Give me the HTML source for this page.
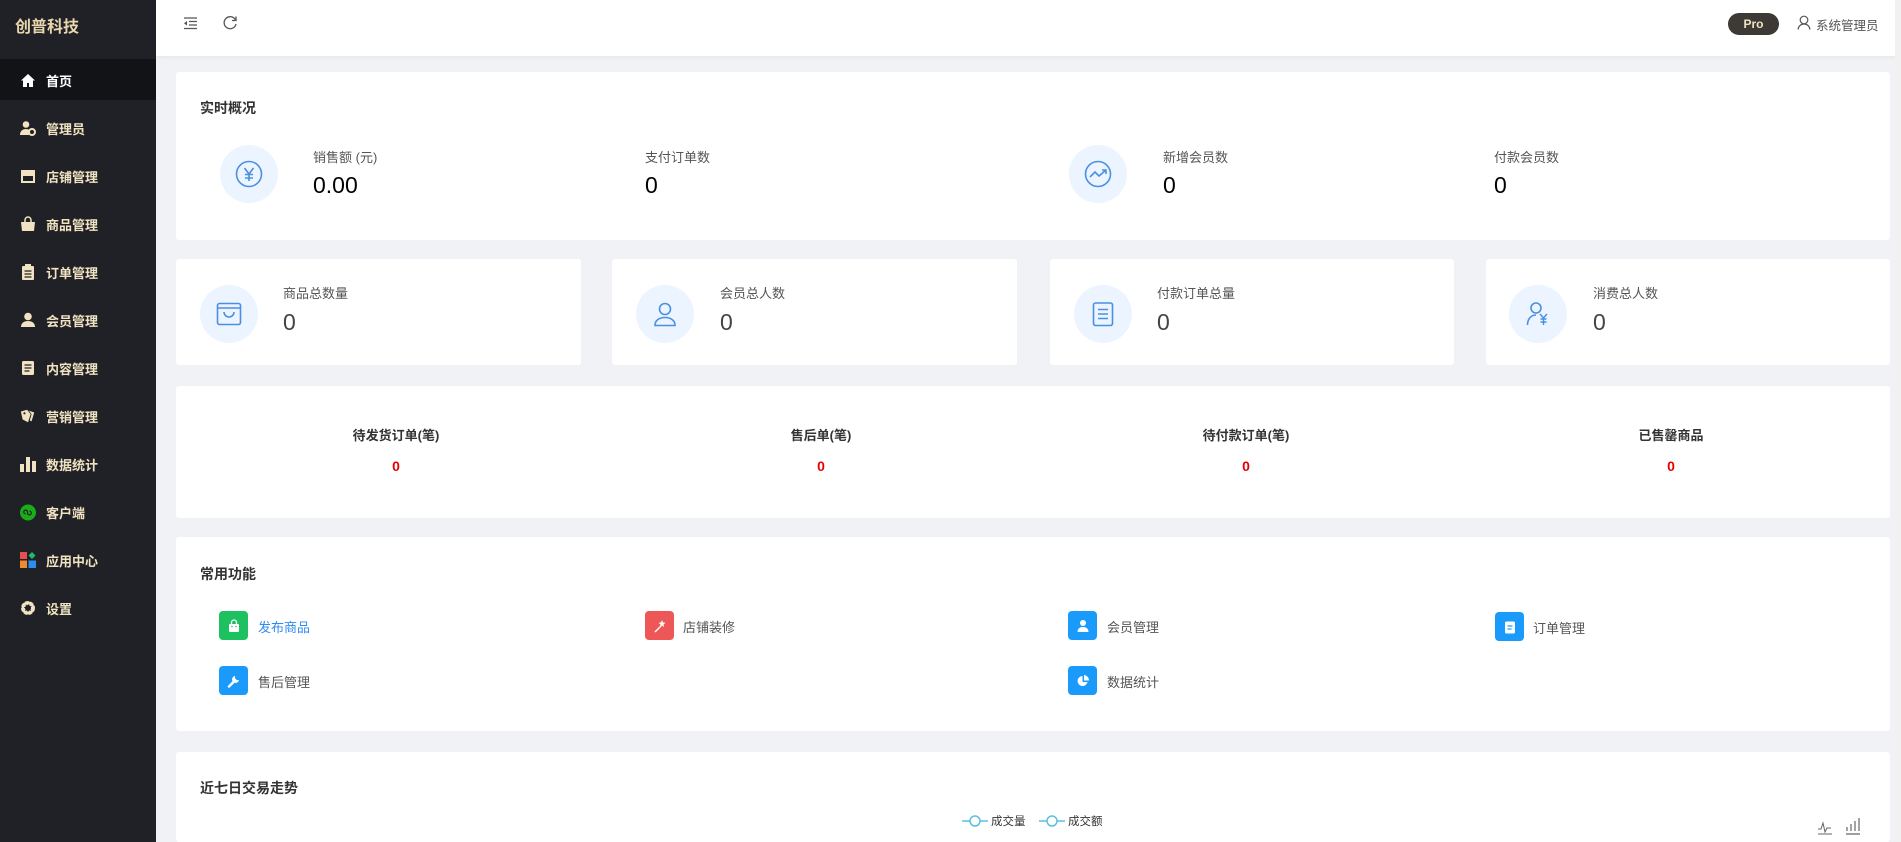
<!DOCTYPE html>
<html style="width:1901px;height:842px;overflow:hidden;background:#f0f2f5"><head><meta charset="utf-8"><style>
*{margin:0;padding:0;box-sizing:border-box}
body{width:1901px;height:842px;overflow:hidden;background:#f0f2f5;font-family:"Liberation Sans","Noto Sans CJK SC",sans-serif;position:relative;color:#333}
.a{position:absolute}
.side{left:0;top:0;width:156px;height:842px;background:#202126}
.logo{left:15px;top:13px;font-size:16px;font-weight:bold;color:#e8d6ad}
.act{left:0;top:59px;width:156px;height:41px;background:#121317}
.mi{left:20px;height:20px;display:flex;align-items:center;font-size:13px;font-weight:bold;color:#f1e3c2}
.mi .ic{width:16px;height:16px;margin-right:10px;display:flex;align-items:center;justify-content:center}
.hdr{left:156px;top:0;width:1745px;height:56px;background:#fff;box-shadow:0 1px 4px rgba(0,0,0,.06)}
.card{background:#fff;border-radius:3px}
.t{font-size:14px;font-weight:bold;color:#333}
.circ{width:58px;height:58px;border-radius:50%;background:#ecf4ff;display:flex;align-items:center;justify-content:center}
.lb{font-size:13px;color:#555}
.v1{font-size:23px;color:#000}
.v2{font-size:23px;color:#444}
.cl{font-size:13px;font-weight:bold;color:#333;text-align:center;width:200px}
.cv{font-size:14px;font-weight:bold;color:#e60000;text-align:center;width:200px}
.fi{width:29px;height:29px;border-radius:4px;display:flex;align-items:center;justify-content:center}
.ft{font-size:13px;color:#555}
</style></head><body>
<div class="a side"></div>
<div class="a logo">创普科技</div>
<div class="a act"></div>
<div class="a mi" style="top:70px;color:#fff"><span class="ic"><svg width="16" height="15" viewBox="0 0 16 15"><path d="M8 1L1 7.5h2V14h4v-4h2v4h4V7.5h2z" fill="#fff"/></svg></span>首页</div>
<div class="a mi" style="top:118px"><span class="ic"><svg width="16" height="16" viewBox="0 0 16 16"><circle cx="6" cy="4.5" r="3.3" fill="#f1e3c2"/><path d="M0 15c0-4 2.5-6 6-6 1.5 0 2.5.4 3 .8V15z" fill="#f1e3c2"/><circle cx="12" cy="12" r="3" fill="none" stroke="#f1e3c2" stroke-width="2"/></svg></span>管理员</div>
<div class="a mi" style="top:166px"><span class="ic"><svg width="16" height="14" viewBox="0 0 16 14"><path d="M1 1h14v4H1z" fill="#f1e3c2"/><path d="M2 6h12v7H2z" fill="none" stroke="#f1e3c2" stroke-width="2"/></svg></span>店铺管理</div>
<div class="a mi" style="top:214px"><span class="ic"><svg width="16" height="16" viewBox="0 0 16 16"><path d="M5 6V4a3 3 0 016 0v2" fill="none" stroke="#f1e3c2" stroke-width="1.5"/><path d="M1 6h14l-1 9H2z" fill="#f1e3c2"/></svg></span>商品管理</div>
<div class="a mi" style="top:262px"><span class="ic"><svg width="14" height="16" viewBox="0 0 14 16"><rect x="1" y="2" width="12" height="14" rx="1" fill="#f1e3c2"/><rect x="4" y="0" width="6" height="3" fill="#f1e3c2"/><path d="M3.5 7h7M3.5 10h7M3.5 13h7" stroke="#202126" stroke-width="1.3"/></svg></span>订单管理</div>
<div class="a mi" style="top:310px"><span class="ic"><svg width="16" height="16" viewBox="0 0 16 16"><circle cx="8" cy="4.5" r="3.8" fill="#f1e3c2"/><path d="M1 15c0-4 3-6 7-6s7 2 7 6z" fill="#f1e3c2"/></svg></span>会员管理</div>
<div class="a mi" style="top:358px"><span class="ic"><svg width="14" height="16" viewBox="0 0 14 16"><rect x="1" y="1" width="12" height="14" rx="1.5" fill="#f1e3c2"/><path d="M3.5 5h7M3.5 8h7M3.5 11h5" stroke="#202126" stroke-width="1.3"/></svg></span>内容管理</div>
<div class="a mi" style="top:406px"><span class="ic"><svg width="18" height="16" viewBox="0 0 18 16"><path d="M1 3l7-2 4 5-3 9-6-3z" fill="#f1e3c2"/><path d="M10 2l6 2-3 10-2-1 2-7z" fill="#f1e3c2"/><circle cx="5" cy="5" r="1.2" fill="#202126"/></svg></span>营销管理</div>
<div class="a mi" style="top:454px"><span class="ic"><svg width="16" height="16" viewBox="0 0 16 16"><rect x="0" y="8" width="4" height="8" fill="#f1e3c2"/><rect x="6" y="1" width="4" height="15" fill="#f1e3c2"/><rect x="12" y="5" width="4" height="11" fill="#f1e3c2"/></svg></span>数据统计</div>
<div class="a mi" style="top:502px"><span class="ic"><svg width="17" height="17" viewBox="0 0 17 17"><circle cx="8.5" cy="8.5" r="8.5" fill="#1aad19"/><path d="M6 10a2 2 0 112-2v1a2 2 0 102-2" fill="none" stroke="#202126" stroke-width="1.3"/></svg></span>客户端</div>
<div class="a mi" style="top:550px"><span class="ic"><svg width="16" height="16" viewBox="0 0 16 16"><rect x="0" y="0" width="7" height="7" fill="#e94e4e"/><rect x="0" y="8.5" width="7" height="7.5" fill="#f08a2e"/><rect x="8.5" y="8.5" width="7.5" height="7.5" fill="#2d8cf0"/><path d="M12 0l3.5 3.5L12 7 8.5 3.5z" fill="#19be6b"/></svg></span>应用中心</div>
<div class="a mi" style="top:598px"><span class="ic"><svg width="16" height="16" viewBox="0 0 16 16"><circle cx="8" cy="8" r="5" fill="none" stroke="#f1e3c2" stroke-width="4" stroke-dasharray="3 1.2"/><circle cx="8" cy="8" r="5.2" fill="none" stroke="#f1e3c2" stroke-width="2.5"/></svg></span>设置</div>

<div class="a hdr"></div>
<svg class="a" style="left:183px;top:17px" width="15" height="13" viewBox="0 0 15 13"><path d="M1 1h13M6 4.5h8M6 8h8M1 11.5h13" stroke="#555" stroke-width="1.2"/><path d="M4 4l-3 2.3 3 2.3z" fill="#555"/></svg>
<svg class="a" style="left:222px;top:15px" width="16" height="16" viewBox="0 0 16 16"><path d="M13.5 5A6 6 0 1014 9" fill="none" stroke="#555" stroke-width="1.3"/><path d="M14 1.5v4h-4" fill="none" stroke="#555" stroke-width="1.3"/></svg>
<div class="a" style="left:1728px;top:13px;width:51px;height:22px;border-radius:11px;background:#3d3a36;color:#f1e3c2;font-size:12px;font-weight:bold;text-align:center;line-height:22px">Pro</div>
<svg class="a" style="left:1797px;top:15px" width="14" height="15" viewBox="0 0 14 15"><circle cx="7" cy="5" r="3.8" fill="none" stroke="#555" stroke-width="1.2"/><path d="M1 14.5c.5-3.5 3-5.5 6-5.5s5.5 2 6 5.5" fill="none" stroke="#555" stroke-width="1.2"/></svg>
<div class="a" style="left:1816px;top:15px;font-size:12.5px;color:#555">系统管理员</div>

<div class="a card" style="left:176px;top:72px;width:1714px;height:168px"></div>
<div class="a t" style="left:200px;top:98px">实时概况</div>
<div class="a circ" style="left:220px;top:145px"><svg width="28" height="28" viewBox="0 0 28 28"><circle cx="14" cy="14" r="12.5" fill="none" stroke="#4a90e2" stroke-width="1.6"/><path d="M9.5 8l4.5 6 4.5-6M14 14v7M10 14.5h8M10 18h8" fill="none" stroke="#4a90e2" stroke-width="1.6"/></svg></div>
<div class="a lb" style="left:313px;top:147px">销售额 (元)</div><div class="a v1" style="left:313px;top:172px">0.00</div>
<div class="a lb" style="left:645px;top:147px">支付订单数</div><div class="a v1" style="left:645px;top:172px">0</div>
<div class="a circ" style="left:1069px;top:145px"><svg width="28" height="28" viewBox="0 0 28 28"><circle cx="14" cy="14" r="12.5" fill="none" stroke="#4a90e2" stroke-width="1.6"/><path d="M6 17l5-5 4 4 7-6M18 10h4v4" fill="none" stroke="#4a90e2" stroke-width="1.6"/></svg></div>
<div class="a lb" style="left:1163px;top:147px">新增会员数</div><div class="a v1" style="left:1163px;top:172px">0</div>
<div class="a lb" style="left:1494px;top:147px">付款会员数</div><div class="a v1" style="left:1494px;top:172px">0</div>

<div class="a card" style="left:176px;top:259px;width:405px;height:106px"></div>
<div class="a card" style="left:612px;top:259px;width:405px;height:106px"></div>
<div class="a card" style="left:1050px;top:259px;width:404px;height:106px"></div>
<div class="a card" style="left:1486px;top:259px;width:404px;height:106px"></div>
<div class="a circ" style="left:200px;top:285px"><svg width="26" height="24" viewBox="0 0 26 24"><rect x="1.5" y="1.5" width="23" height="21" rx="2" fill="none" stroke="#4a90e2" stroke-width="1.6"/><path d="M1.5 6h23M8 10a5 5 0 0010 0" fill="none" stroke="#4a90e2" stroke-width="1.6"/></svg></div>
<div class="a lb" style="left:283px;top:283px">商品总数量</div><div class="a v2" style="left:283px;top:309px">0</div>
<div class="a circ" style="left:636px;top:285px"><svg width="24" height="26" viewBox="0 0 24 26"><circle cx="12" cy="8" r="5.5" fill="none" stroke="#4a90e2" stroke-width="1.6"/><path d="M2 24.5c0-5 4-8 10-8s10 3 10 8z" fill="none" stroke="#4a90e2" stroke-width="1.6"/></svg></div>
<div class="a lb" style="left:720px;top:283px">会员总人数</div><div class="a v2" style="left:720px;top:309px">0</div>
<div class="a circ" style="left:1074px;top:285px"><svg width="22" height="26" viewBox="0 0 22 26"><rect x="1.5" y="2" width="19" height="22.5" rx="2" fill="none" stroke="#4a90e2" stroke-width="1.6"/><path d="M6 8.5h10M6 13h10M6 17.5h10" stroke="#4a90e2" stroke-width="1.6"/></svg></div>
<div class="a lb" style="left:1157px;top:283px">付款订单总量</div><div class="a v2" style="left:1157px;top:309px">0</div>
<div class="a circ" style="left:1509px;top:285px"><svg width="24" height="26" viewBox="0 0 24 26"><circle cx="10" cy="7" r="5" fill="none" stroke="#4a90e2" stroke-width="1.6"/><path d="M1.5 24c0-6 3.5-10 8.5-10" fill="none" stroke="#4a90e2" stroke-width="1.6"/><path d="M14 13l3.5 4 3.5-4M17.5 17v7M14.5 18h6M14.5 21h6" fill="none" stroke="#4a90e2" stroke-width="1.4"/></svg></div>
<div class="a lb" style="left:1593px;top:283px">消费总人数</div><div class="a v2" style="left:1593px;top:309px">0</div>

<div class="a card" style="left:176px;top:386px;width:1714px;height:132px"></div>
<div class="a cl" style="left:296px;top:425px">待发货订单(笔)</div><div class="a cv" style="left:296px;top:458px">0</div>
<div class="a cl" style="left:721px;top:425px">售后单(笔)</div><div class="a cv" style="left:721px;top:458px">0</div>
<div class="a cl" style="left:1146px;top:425px">待付款订单(笔)</div><div class="a cv" style="left:1146px;top:458px">0</div>
<div class="a cl" style="left:1571px;top:425px">已售罄商品</div><div class="a cv" style="left:1571px;top:458px">0</div>

<div class="a card" style="left:176px;top:537px;width:1714px;height:194px"></div>
<div class="a t" style="left:200px;top:564px">常用功能</div>
<div class="a fi" style="left:219px;top:611px;background:#1ec15f"><svg width="14" height="14" viewBox="0 0 14 14"><path d="M4.5 5V3.5a2.5 2.5 0 015 0V5" fill="none" stroke="#fff" stroke-width="1.3"/><rect x="2" y="5" width="10" height="8" rx="1" fill="#fff"/><circle cx="5" cy="7.5" r=".8" fill="#1ec15f"/><circle cx="9" cy="7.5" r=".8" fill="#1ec15f"/></svg></div>
<div class="a ft" style="left:258px;top:617px;color:#2d8cf0">发布商品</div>
<div class="a fi" style="left:645px;top:611px;background:#ee5757"><svg width="14" height="14" viewBox="0 0 14 14"><path d="M2 13l6-6" stroke="#fff" stroke-width="1.4"/><path d="M9 1l1 2.5 2.5.3-2 1.7.6 2.5L9 6.6 7 8l.5-2.5-2-1.7 2.5-.3z" fill="#fff"/></svg></div>
<div class="a ft" style="left:683px;top:617px">店铺装修</div>
<div class="a fi" style="left:1068px;top:611px;background:#1a9bfc"><svg width="14" height="14" viewBox="0 0 14 14"><circle cx="7" cy="4" r="3" fill="#fff"/><path d="M1.5 13c0-3.5 2.5-5 5.5-5s5.5 1.5 5.5 5z" fill="#fff"/></svg></div>
<div class="a ft" style="left:1107px;top:617px">会员管理</div>
<div class="a fi" style="left:1495px;top:612px;background:#1a9bfc"><svg width="12" height="14" viewBox="0 0 12 14"><rect x="1" y="1.5" width="10" height="12" rx="1.5" fill="#fff"/><path d="M3.5 6h5M3.5 9h4" stroke="#1a9bfc" stroke-width="1.2"/></svg></div>
<div class="a ft" style="left:1533px;top:618px">订单管理</div>
<div class="a fi" style="left:219px;top:666px;background:#1a9bfc"><svg width="14" height="14" viewBox="0 0 14 14"><path d="M2 12.5l6-6" stroke="#fff" stroke-width="2.4" stroke-linecap="round"/><path d="M8 2a3.5 3.5 0 104 4l-2 .3L8.2 4.5z" fill="#fff"/></svg></div>
<div class="a ft" style="left:258px;top:672px">售后管理</div>
<div class="a fi" style="left:1068px;top:666px;background:#1a9bfc"><svg width="14" height="14" viewBox="0 0 14 14"><path d="M6.5 2a5 5 0 105 6H6.5z" fill="#fff"/><path d="M8 1v5.5h5A5.5 5.5 0 008 1z" fill="#fff"/></svg></div>
<div class="a ft" style="left:1107px;top:672px">数据统计</div>

<div class="a card" style="left:176px;top:752px;width:1714px;height:90px"></div>
<div class="a t" style="left:200px;top:778px">近七日交易走势</div>
<svg class="a" style="left:962px;top:815px" width="26" height="12" viewBox="0 0 26 12"><path d="M0 6h26" stroke="#5bc0de" stroke-width="1.5"/><circle cx="13" cy="6" r="5" fill="#fff" stroke="#5bc0de" stroke-width="1.5"/></svg>
<div class="a" style="left:991px;top:813px;font-size:11.5px;color:#333">成交量</div>
<svg class="a" style="left:1039px;top:815px" width="26" height="12" viewBox="0 0 26 12"><path d="M0 6h26" stroke="#5bc0de" stroke-width="1.5"/><circle cx="13" cy="6" r="5" fill="#fff" stroke="#5bc0de" stroke-width="1.5"/></svg>
<div class="a" style="left:1068px;top:813px;font-size:11.5px;color:#333">成交额</div>
<svg class="a" style="left:1817px;top:818px" width="16" height="17" viewBox="0 0 16 17"><path d="M1 11h3l2-6 2 9 2-4h4M1 16h14" fill="none" stroke="#666" stroke-width="1"/></svg>
<svg class="a" style="left:1845px;top:816px" width="16" height="19" viewBox="0 0 16 19"><path d="M2 15V11M6 15V8M10 15V5M14 15V2M1 18h14" fill="none" stroke="#666" stroke-width="1.2"/></svg>
<div class="a" style="left:1895px;top:0;width:6px;height:842px;background:#f1f1f1"></div>
</body></html>
